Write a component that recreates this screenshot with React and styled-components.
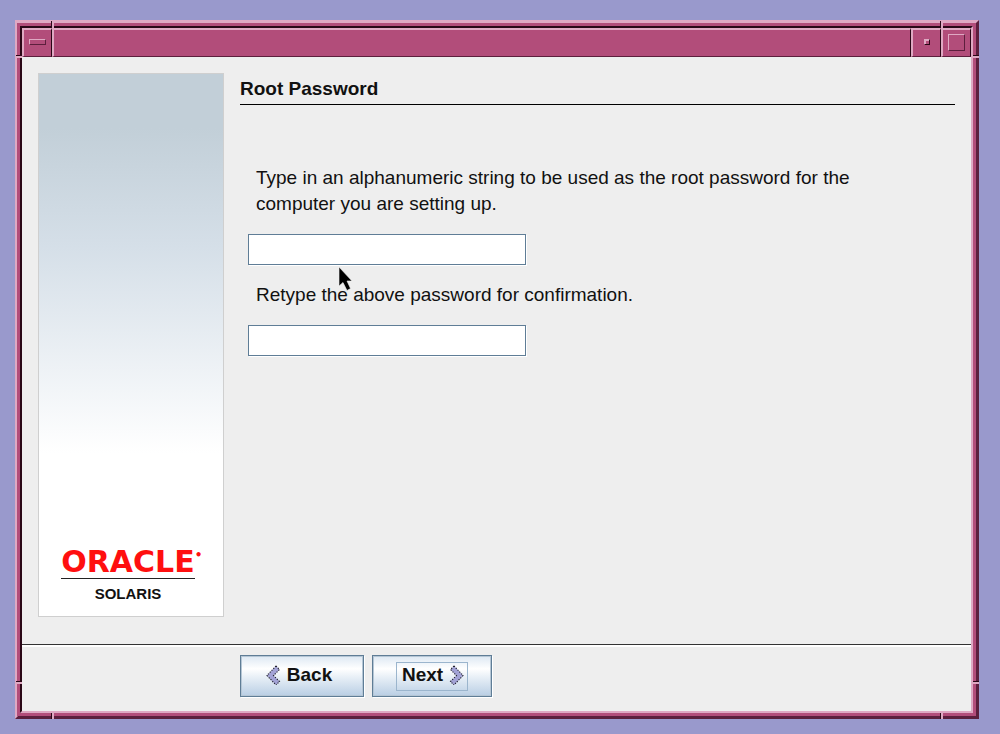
import React from 'react';
import styled, { createGlobalStyle, css } from 'styled-components';

const c = {
  desktop: '#9999cc',
  light: '#dfa9c3',
  mid: '#b24d7a',
  dark: '#5c1f3d',
  black: '#2a0716',
  face: '#eeeeee',
  steel: '#5f7d96',
};

const GlobalStyle = createGlobalStyle`
  * { box-sizing: border-box; }
  body {
    margin: 0;
    background: ${c.desktop};
    color: #111;
    font: 19px/26px "Liberation Sans", Arial, sans-serif;
  }
`;

const Desktop = styled.div`
  display: flex;
  min-height: 100vh;
  padding: 20px 21px 15px 15px;
`;

const Frame = styled.div`
  position: relative;
  display: flex;
  flex: 1;
  border: 3px solid;
  border-color: ${c.light} ${c.dark} ${c.dark} ${c.light};
`;

const FrameInner = styled.div`
  display: flex;
  flex: 1;
  flex-direction: column;
  min-width: 0;
  border: 2px solid;
  border-color: ${c.black} ${c.light} ${c.light} ${c.black};
  outline: 3px solid ${c.mid};
  margin: 3px 3px 3px 2px;
`;

/* Grooves that mark the resize corners of the frame. */
const notchSides = {
  top: css`top: -2px; width: 3px; height: 7px;`,
  bottom: css`bottom: -3px; width: 3px; height: 6px;`,
  left: css`left: -2px; width: 6px; height: 3px;`,
  right: css`right: -3px; width: 6px; height: 3px;`,
};

const Notch = styled.span`
  position: absolute;
  background: ${c.light};
  ${({ $side }) => notchSides[$side]}
  ${({ $side, $end }) =>
    $side === 'top' || $side === 'bottom'
      ? css`
          ${$end ? 'right' : 'left'}: 33px;
          border-left: 1px solid ${c.black};
        `
      : css`
          ${$end ? 'bottom' : 'top'}: 32px;
          border-top: 1px solid ${c.black};
        `}
`;

const TitleBar = styled.header`
  display: flex;
  height: 29px;
`;

const bevel = css`
  border: solid;
  border-width: 2px 1px 1px 2px;
  border-color: ${c.light} ${c.black} ${c.dark} ${c.light};
  background: ${c.mid};
`;

const TitleGrip = styled.div`
  flex: 1;
  ${bevel}
`;

const TitleButton = styled.button`
  display: flex;
  align-items: center;
  justify-content: center;
  width: 30px;
  padding: 0 0 2px;
  ${bevel}
`;

const Glyph = styled.span`
  width: ${({ $w }) => $w}px;
  height: ${({ $h }) => $h}px;
  border: 1px solid;
  border-color: ${({ $sunk }) =>
    $sunk ? `${c.light} ${c.black} ${c.black} ${c.light}` : `${c.light} ${c.dark} ${c.dark} ${c.light}`};
  box-shadow: inset 1px 1px 0 ${({ $sunk }) => ($sunk ? c.light : 'transparent')};
`;

const Client = styled.div`
  display: flex;
  flex: 1;
  flex-direction: column;
  background: ${c.face};
`;

const Main = styled.main`
  display: flex;
  flex: 1;
  gap: 16px;
  padding: 16px 16px 27px;
`;

const Sidebar = styled.aside`
  display: flex;
  flex: 0 0 186px;
  flex-direction: column;
  align-items: center;
  justify-content: flex-end;
  padding: 0 6px 12px 0;
  border: 1px solid #cfcfcf;
  background: linear-gradient(#c2cfd8 0%, #c2cfd8 10%, #d5dfe8 32%, #ffffff 70%);
`;

const Brand = styled.div`
  display: flex;
  width: 134px;
  justify-content: center;
  padding-bottom: 2px;
  color: #ff0f0f;
  font: bold 30px/28px "DejaVu Sans", sans-serif;
  border-bottom: 1px solid #222;
`;

const Registered = styled.span`
  width: 0;
  font-size: 12px;
  line-height: 14px;
`;

const Product = styled.div`
  padding-top: 5px;
  font-size: 15px;
  line-height: 20px;
  font-weight: bold;
`;

const Content = styled.section`
  flex: 1;
  min-width: 0;
  padding-top: 4px;
`;

const Heading = styled.h1`
  margin: 0;
  padding-bottom: 3px;
  border-bottom: 1px solid #000;
  font-size: 19px;
  line-height: 24px;
`;

const Form = styled.form`
  position: relative;
  display: flex;
  flex-direction: column;
  align-items: flex-start;
  gap: 17px;
  padding: 60px 8px 0;
`;

const Label = styled.label`
  max-width: 640px;
  padding-left: 8px;
`;

const Field = styled.input`
  width: 278px;
  max-width: 100%;
  height: 31px;
  padding: 0 6px;
  border: 1px solid ${c.steel};
  border-radius: 0;
  outline: none;
  background: #fff;
  box-shadow: 1px 1px 0 #fff;
  font: inherit;
`;

const Cursor = styled.svg`
  position: absolute;
  left: 98px;
  top: 161px;
`;

const Footer = styled.footer`
  display: flex;
  gap: 8px;
  padding: 10px 16px 14px 218px;
  border-top: 1px solid #333;
  box-shadow: inset 0 2px 0 #fff;
`;

const NavButton = styled.button`
  display: flex;
  align-items: center;
  justify-content: center;
  width: ${({ $back }) => ($back ? 124 : 120)}px;
  height: 42px;
  padding: 0 ${({ $back }) => ($back ? 8 : 0)}px 0 0;
  border: 1px solid ${c.steel};
  outline: none;
  box-shadow: inset 0 0 0 1px #b5c6d5, 1px 1px 0 #fff;
  background: linear-gradient(#dde8f3 0%, #ffffff 32%, #e9f0f7 52%, #b9cee4 100%);
  color: #111;
  font: bold 19px/24px "Liberation Sans", Arial, sans-serif;
`;

const ButtonFace = styled.span`
  display: flex;
  align-items: center;
  gap: 6px;
  padding: 0 3px 3px 5px;
  border: 1px solid ${({ $focused }) => ($focused ? '#9bb5cd' : 'transparent')};
`;

function Chevron({ flip }) {
  return (
    <svg width="15" height="20" viewBox="0 0 15 20" aria-hidden="true">
      <g transform={flip ? 'translate(15 0) scale(-1 1)' : undefined}>
        <path d="M10 1 L13.5 4.5 L7.5 10.5 L13.5 16.5 L10 20 L1 10.5 Z" fill="#a3a3d6" />
        <path
          d="M10 1 L1 10.5 L10 20 M10 1 L13.5 4.5 L7.5 10.5 L13.5 16.5 L10 20"
          fill="none"
          stroke="#222230"
          strokeWidth="1.1"
          strokeDasharray="1.3 1.3"
        />
      </g>
    </svg>
  );
}

export default function App() {
  return (
    <>
      <GlobalStyle />
      <Desktop>
        <Frame>
          <FrameInner>
            <TitleBar>
              <TitleButton type="button" aria-label="Window menu">
                <Glyph $w={17} $h={6} />
              </TitleButton>
              <TitleGrip />
              <TitleButton type="button" aria-label="Minimize">
                <Glyph $w={6} $h={6} $sunk />
              </TitleButton>
              <TitleButton type="button" aria-label="Maximize">
                <Glyph $w={17} $h={17} />
              </TitleButton>
            </TitleBar>
            <Client>
              <Main>
                <Sidebar>
                  <Brand>
                    ORACLE<Registered>•</Registered>
                  </Brand>
                  <Product>SOLARIS</Product>
                </Sidebar>
                <Content>
                  <Heading>Root Password</Heading>
                  <Form>
                    <Label htmlFor="password">
                      Type in an alphanumeric string to be used as the root password for the
                      computer you are setting up.
                    </Label>
                    <Field id="password" type="password" />
                    <Label htmlFor="confirm">Retype the above password for confirmation.</Label>
                    <Field id="confirm" type="password" />
                    <Cursor width="16" height="26" viewBox="0 0 16 26" aria-hidden="true">
                      <path
                        d="M1 1 V20 L5 16.5 L9 24.5 L12.5 22.5 L9 15 H14 Z"
                        fill="#000"
                        stroke="#eee"
                        strokeWidth="0.6"
                      />
                    </Cursor>
                  </Form>
                </Content>
              </Main>
              <Footer>
                <NavButton type="button" $back>
                  <ButtonFace>
                    <Chevron />
                    Back
                  </ButtonFace>
                </NavButton>
                <NavButton type="button">
                  <ButtonFace $focused>
                    Next
                    <Chevron flip />
                  </ButtonFace>
                </NavButton>
              </Footer>
            </Client>
          </FrameInner>
          <Notch $side="top" />
          <Notch $side="top" $end />
          <Notch $side="bottom" />
          <Notch $side="bottom" $end />
          <Notch $side="left" />
          <Notch $side="left" $end />
          <Notch $side="right" />
          <Notch $side="right" $end />
        </Frame>
      </Desktop>
    </>
  );
}
